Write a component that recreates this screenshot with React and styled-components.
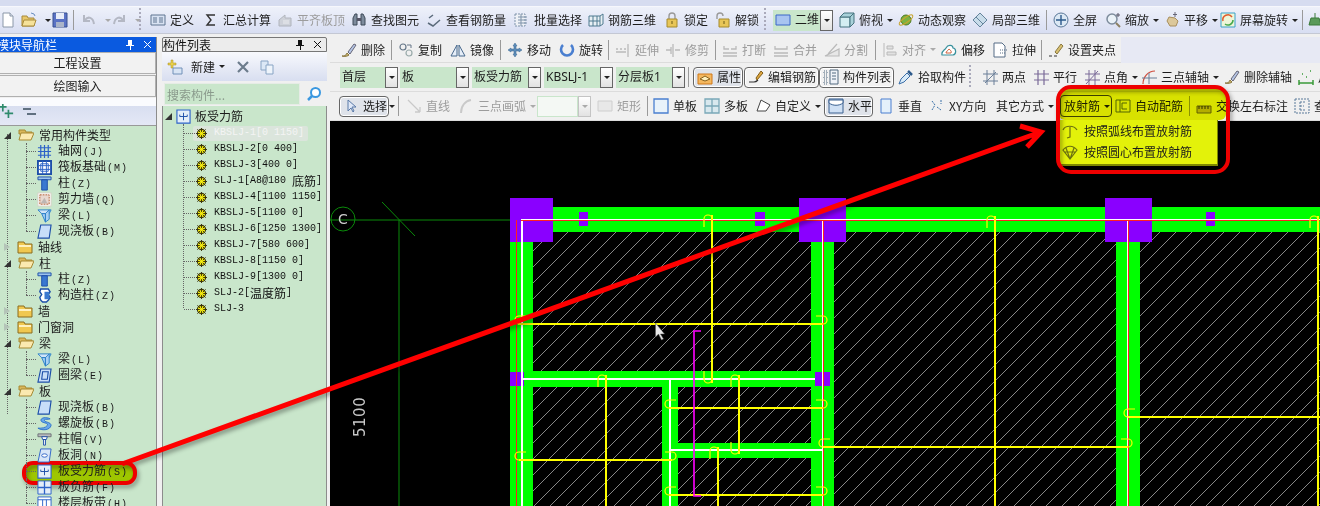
import styled, { createGlobalStyle } from "styled-components";

const GlobalStyle = createGlobalStyle`
  html, body { margin: 0; padding: 0; background: #f0f0f0; }
  * { box-sizing: border-box; }
`;

const CJK = `"Noto Sans CJK SC", "Liberation Sans", sans-serif`;

// 16x16 toolbar and tree drawings
const ICONS = {
  doc: <><path d="M3 1h7l3 3v11H3z" fill="#fff" stroke="#8a97a8" /><path d="M10 1v3h3" fill="#dfe5ee" stroke="#8a97a8" /></>,
  open: <><path d="M1 4h5l1 2h6v8H1z" fill="#e8c76a" stroke="#a88a3a" /><path d="M3 8h12l-2 6H1z" fill="#f6e29a" stroke="#a88a3a" /><path d="M10 1l3 1 1 2" fill="none" stroke="#6a8fc0" /></>,
  save: <><path d="M1 1h14v14H1z" fill="#5a72c4" stroke="#39508f" /><path d="M4 1h8v6H4z" fill="#e8edf8" /><path d="M4 10h8v5H4z" fill="#aab4c8" /></>,
  undo: <path d="M3 3v6h6M4 8c3-4 8-3 9 4" fill="none" stroke="#b4b8c4" strokeWidth="2" />,
  redo: <path d="M13 3v6H7M12 8c-3-4-8-3-9 4" fill="none" stroke="#b4b8c4" strokeWidth="2" />,
  define: <><path d="M1 3h14v10H1z" fill="#d8e2f2" stroke="#5f7590" /><path d="M3 6h4M3 8h4M3 10h4M9 6h4M9 8h4M9 10h4" stroke="#5f7590" /></>,
  sigma: <path d="M12 3H4l4 5-4 5h8" fill="none" stroke="#333" strokeWidth="1.4" />,
  level: <><path d="M2 14V8l6-5v3h6v8z" fill="#c8cbd0" stroke="#a0a4aa" /><path d="M6 9h6M6 11h6" stroke="#eee" /></>,
  binoc: <><path d="M2 6l2-4h2v11H2zM14 6l-2-4h-2v11h4z" fill="#7d8b9c" stroke="#3e4a58" /><path d="M6 6h4v3H6z" fill="#556" /></>,
  rebarSee: <path d="M2 11l5 3 7-6M3 6l4-3" fill="none" stroke="#5a6a7a" strokeWidth="1.5" />,
  batch: <><path d="M1 2h10v12H1z" fill="#eef1f6" stroke="#7f93aa" strokeDasharray="2 1" /><path d="M4 5h9M4 8h9M4 11h9M7 2v12" stroke="#7f93aa" /></>,
  rebar3d: <path d="M1 4h11l3-2v10l-3 2H1zM12 4v10M5 4v10M9 4v10M1 9h11" fill="#e8f0f4" stroke="#4e7a90" />,
  lock: <><path d="M5 7V4a3 3 0 0 1 6 0v3" fill="none" stroke="#9a9a9a" strokeWidth="1.4" /><path d="M3 7h10v8H3z" fill="#e8c658" stroke="#a58a2c" /><path d="M8 9v3" stroke="#6b5a18" /></>,
  unlock: <><path d="M2 7V4a3 3 0 0 1 6 0" fill="none" stroke="#9a9a9a" strokeWidth="1.4" /><path d="M4 7h10v8H4z" fill="#e8c658" stroke="#a58a2c" /><path d="M9 9v3" stroke="#6b5a18" /></>,
  rect2d: <path d="M1 3h14v10H1z" fill="#a8c4f0" stroke="#3a66c8" />,
  cube: <><path d="M1 5h10v10H1z" fill="#d4eef2" stroke="#44727e" /><path d="M1 5l4-4h10l-4 4zM11 5l4-4v10l-4 4z" fill="#a9d2da" stroke="#44727e" /></>,
  orbit: <><circle cx="8" cy="8" r="5" fill="#7cb342" stroke="#4d7a20" /><ellipse cx="8" cy="8" rx="8" ry="2.4" transform="rotate(-35 8 8)" fill="none" stroke="#c8a42c" /></>,
  part3d: <path d="M1 8l7-7 7 7-7 7zM4 5l7 7M8 1l7 7M1 8l7 7M6 3l-4 4" fill="#c8dcea" stroke="#64849c" />,
  full: <><circle cx="8" cy="8" r="7" fill="#dbe8f4" stroke="#5a7898" /><path d="M8 3v10M3 8h10" stroke="#2c5a8c" strokeWidth="1.4" /></>,
  zoom: <><circle cx="7" cy="7" r="5" fill="#eaf2f8" stroke="#7d8c9c" strokeWidth="1.5" /><path d="M11 11l4 4" stroke="#8c8062" strokeWidth="2" /><path d="M13 1v4M11 3h4" stroke="#556" /></>,
  pan: <><path d="M3 9l2-4 6 1 3 3-2 5H6z" fill="#dcc89a" stroke="#a88e5c" /><path d="M11 0v5M9 2.5h4" stroke="#667" /></>,
  spinScreen: <><path d="M1 1h14v14H1z" fill="#eef6d8" stroke="#3aa0c8" /><path d="M3 9a5 5 0 0 1 9-4" fill="none" stroke="#e05a2c" strokeWidth="1.5" /><path d="M13 8a5 5 0 0 1-8 4" fill="none" stroke="#46a84a" strokeWidth="1.5" /></>,
  more: <path d="M2 13h12l-2-7H4zM8 1v5" fill="#5a9a5a" stroke="#3a7a3a" />,
  brush: <><path d="M1 14c2 0 4 0 5-3l2 2c-1 1-4 2-7 1z" fill="#c7b26a" stroke="#8a7840" /><path d="M7 10l6-8 2 1-6 9z" fill="#b6c6e6" stroke="#667" /></>,
  copy: <><circle cx="5" cy="5" r="3" fill="none" stroke="#678" strokeWidth="1.2" /><circle cx="11" cy="11" r="3" fill="none" stroke="#9aa" strokeWidth="1.2" /><path d="M9 3h4v3" fill="none" stroke="#678" /></>,
  mirror: <><path d="M7 3L1 14h6z" fill="#e6eef8" stroke="#47688c" /><path d="M9 3l6 11H9z" fill="#e6eef8" stroke="#47688c" /></>,
  move: <path d="M8 1l2 3H9v3h3V6l3 2-3 2V9H9v3h1l-2 3-2-3h1V9H4v1L1 8l3-2v1h3V4H6z" fill="#5d8cb8" stroke="#3a6690" strokeWidth=".5" />,
  spin: <path d="M12 3a6 6 0 1 1-8 0" fill="none" stroke="#4a7fd0" strokeWidth="2.6" />,
  extend: <path d="M1 7h2M5 7h2M9 7h2M1 10h10M13 2v13" stroke="#a8a8a8" fill="none" strokeWidth="1.3" />,
  trim: <path d="M1 8h5M10 8h5M8 2v13M6 5v7" stroke="#a8a8a8" fill="none" strokeWidth="1.3" />,
  breakIt: <path d="M2 4v3h5M14 4v3H9M1 11h14M1 14h14" stroke="#a8a8a8" fill="none" strokeWidth="1.3" />,
  merge: <path d="M2 4v3h12V4M1 11h14M1 14h14" stroke="#a8a8a8" fill="none" strokeWidth="1.3" />,
  split: <path d="M1 14h14V7zM13 2L4 12" stroke="#a8a8a8" fill="#e4e4e4" strokeWidth="1.2" />,
  alignIt: <path d="M2 1v14M5 4h6v3H5zM5 10h9v3H5z" stroke="#a8a8a8" fill="#ddd" />,
  offset: <><path d="M1 13c-1-4 3-5 4-7 2-4 7-3 7 0 3 0 4 6 0 7z" fill="#fff" stroke="#38909c" strokeWidth="1.2" /><path d="M5 11c0-2 2-2 3-4 1 1 3 2 2 4z" fill="none" stroke="#d0603c" /></>,
  stretch: <><path d="M2 1h8l3 3v11H2z" fill="#fff" stroke="#566d86" /><path d="M8 8h7M8 11h5" stroke="#566d86" strokeDasharray="1 1" /></>,
  grip: <><path d="M1 14h3M6 14h3" stroke="#333" /><path d="M7 10l6-8 2 2-6 8z" fill="#d8c070" stroke="#8a7840" /></>,
  attr: <><path d="M1 5h14v10H1z" fill="#f4b860" stroke="#d07818" /><path d="M3 10l5-3 5 3-5 2z" fill="#fff2c0" stroke="#86601c" /></>,
  editBar: <><path d="M1 13h5c2 0 3-1 4-2" fill="none" stroke="#333" strokeWidth="1.2" /><path d="M8 9l5-7 2 2-6 7z" fill="#e0a840" stroke="#805c18" /></>,
  list: <><path d="M1 2h3v3H1zM1 7h3v3H1zM1 12h3v3H1z" fill="none" stroke="#526a80" strokeDasharray="1 1" /><path d="M7 1h8v14H7z" fill="#eef2f8" stroke="#526a80" /><path d="M9 4h4M9 7h4M9 10h4" stroke="#526a80" /></>,
  pick: <><path d="M1 15l2-5 6-6 3 3-6 6z" fill="#d8eaf8" stroke="#3a6ea8" /><path d="M10 2l4 4" stroke="#2c5a8c" strokeWidth="2.5" /></>,
  twoPt: <path d="M1 5h15M1 12h15M5 1v15M12 1v15M3 14L14 3" stroke="#6a7f98" fill="none" />,
  para: <path d="M1 5h15M1 11h15M5 1v15M11 1v15" stroke="#7a6a98" fill="none" strokeWidth="1.2" />,
  ptAngle: <path d="M1 5h15M1 11h15M5 1v15M11 1v15M2 15L14 2" stroke="#7a6a98" fill="none" />,
  arc3: <><path d="M2 15C2 8 7 2 14 2" stroke="#d04c3c" fill="none" strokeWidth="1.2" /><path d="M1 9h15M8 4v11" stroke="#6a7f98" /></>,
  ruler: <path d="M1 14h14M1 11v6M15 11v6M4 5h1M12 2h1M8 8h1" stroke="#3a9a3a" fill="none" strokeWidth="1.5" />,
  select: <path d="M5 2v11l3-3 2 4 1-1-2-4h4z" fill="#dfe8f8" stroke="#5a7aa8" />,
  line: <path d="M2 2l12 12M14 14V9M14 14H9" stroke="#bdbdbd" fill="none" strokeWidth="1.3" />,
  arc: <path d="M3 15C3 8 7 3 13 2" stroke="#bdbdbd" fill="none" strokeWidth="2" />,
  rect: <path d="M1 3h14v10H1z" fill="#e6e6e6" stroke="#c4c4c4" />,
  single: <path d="M1 1h14v14H1z" fill="#e8f2fa" stroke="#4a7fd0" strokeWidth="1.3" />,
  multi: <path d="M1 1h14v14H1zM8 1v14M1 8h14" fill="#d8e8ee" stroke="#7aa8b8" strokeWidth="1.3" />,
  custom: <path d="M2 13l4-11 9 5-4 6z" fill="#fff" stroke="#444" />,
  horiz: <><path d="M1 1h14v14H1z" fill="#cfe0f4" stroke="#3a6090" /><path d="M1 5c4 3 10 3 14 0v-3H1z" fill="#fff" stroke="#3a6090" /></>,
  vert: <path d="M3 1h10v14H3z" fill="#e4f0fa" stroke="#4a7fd0" />,
  xy: <path d="M3 3l3 4-3 5M8 9l4 3M12 2v4" stroke="#3a70a8" fill="none" strokeDasharray="2 1" />,
  autoBar: <path d="M1 2h14v12H1zM5 2v12M7 5h5M7 5v6h5" fill="none" stroke="#5a6a10" />,
  swap: <><path d="M1 8h14v7H1z" fill="#c8b840" stroke="#6a6418" /><path d="M3 8v3M6 8v3M9 8v3M12 8v3" stroke="#333" /></>,
  look: <path d="M1 1h14v14H1zM6 4v8M6 4h5M6 8h4M6 12h5" fill="none" stroke="#5a7a9a" strokeDasharray="2 1" />,
  newItem: <><path d="M1 3h3V0h2v3h3v2H6v3H4V5H1z" transform="translate(0 1)" fill="#e8cf4c" stroke="#a88e1c" strokeWidth=".5" /><path d="M6 9h9v6H6z" fill="#d8e4f4" stroke="#7090b8" /></>,
  cross: <path d="M3 3l10 10M13 3L3 13" stroke="#6c7c8c" strokeWidth="2.2" />,
  paste: <><path d="M2 2h7v9H2z" fill="#dce8f6" stroke="#88a4c4" /><path d="M7 6h7v9H7z" fill="#eef4fb" stroke="#88a4c4" /></>,
  search: <><circle cx="9.5" cy="6.5" r="4.5" fill="#fff" stroke="#3a98e0" strokeWidth="2" /><path d="M6 10l-4 4" stroke="#3a98e0" strokeWidth="2.5" /></>,
  plus: <path d="M3 0v8M0 3h7M9 6v9M5 10h9" stroke="#2e8a6c" strokeWidth="1.8" fill="none" />,
  minus: <path d="M2 5h8M6 10h9" stroke="#607080" strokeWidth="1.8" fill="none" />,
  folderOpen: <><path d="M1 3h6l1 2h6v2H1z" fill="#d9b65a" stroke="#a68832" /><path d="M1 13l2-7h13l-3 7z" fill="#fbe9b0" stroke="#a68832" /></>,
  folder: <><path d="M1 3h6l1 2h7v9H1z" fill="#f0c850" stroke="#8a6c20" /><path d="M2 6h12v2H2z" fill="#fff1c0" /></>,
  grid: <path d="M1 4h14M1 8h14M1 12h14M4 1v14M8 1v14M12 1v14" stroke="#2c62c8" fill="none" strokeWidth="1.3" />,
  raft: <><path d="M1 1h14v14H1z" fill="#fff" stroke="#1c4ea8" strokeWidth="2" /><path d="M4 4h8v8H4zM6 1v14M10 1v14M1 6h14M1 10h14" fill="none" stroke="#2c62c8" /></>,
  col: <><path d="M1 1h14v3H1z" fill="#9cc4ee" stroke="#1c4ea8" /><path d="M5 4h6v11H5z" fill="#3a78d0" stroke="#1c4ea8" /></>,
  wall: <><path d="M1 1h14v14H1z" fill="#fff" stroke="#d8d0c8" /><path d="M3 3h10v10H3z" fill="#e8d8d0" stroke="#b05c30" strokeDasharray="2 1" /><path d="M4 12l4-6 3 6z" fill="#a0a0a0" opacity=".6" /></>,
  beam: <><path d="M1 2h14l-2 4H5z" fill="#cfe4f8" stroke="#2c80c8" /><path d="M5 6l4 9V6zM9 6l4-4v10l-4 3z" fill="#a8d0f4" stroke="#2c80c8" /></>,
  slab: <path d="M4 1h11l-2 14H1z" fill="#c8def8" stroke="#1c4ea8" strokeWidth="1.2" />,
  gz: <><path d="M4 1h8l2 3-2 3 2 3-2 3-2 2H6l-2-2-1-3 2-3-2-3z" fill="#fff" stroke="#1c4ea8" strokeWidth="1.5" /><path d="M8 4h5v8H8z" fill="#3a78d0" /></>,
  ring: <path d="M4 1h11l-2 14H1zM6 4h6l-1 8H5z" fill="#c8def8" stroke="#1c4ea8" strokeWidth="1.2" />,
  spiral: <path d="M14 3C8 0 2 3 5 6c3 2 7 1 6 4-2 3-6 3-10 3 5 3 13 2 14-3 0-4-8-3-7-6 1-1 4 0 6-1z" fill="#6aa8ec" stroke="#2c70c8" />,
  cap: <><path d="M1 2h14v3H1z" fill="#b8bcc0" stroke="#6c7074" /><path d="M5 5h6l-1 3H6zM7 8h2v6H7z" fill="#fff" stroke="#1c4ea8" /></>,
  hole: <><path d="M4 1h11l-2 14H1z" fill="#d8e6f8" stroke="#2c62c8" /><ellipse cx="8" cy="8" rx="3" ry="1.8" fill="#fff" stroke="#2c62c8" /></>,
  bar: <><path d="M1 1h14v14H1z" fill="#e4eef8" stroke="#2c62c8" strokeWidth="1.2" /><path d="M8 4v8M4 8h8M4 8V6M12 8v-2" fill="none" stroke="#1c4ea8" /></>,
  neg: <><path d="M1 1h14v14H1z" fill="#e4eef8" stroke="#2c62c8" /><path d="M1 8h14M8 1v14" stroke="#2c62c8" strokeWidth="1.4" /></>,
  band: <><path d="M1 1h14v14H1z" fill="#fff" stroke="#2c62c8" /><path d="M1 4h14M6 4v11M10 4v11" stroke="#2c62c8" /></>,
  rod: <><circle cx="8" cy="8" r="6" fill="#f4ec10" stroke="#3a3408" strokeWidth="1.6" /><path d="M8 0v16M0 8h16M2 2l12 12M14 2L2 14" stroke="#3a3408" strokeWidth="1.4" /><circle cx="8" cy="8" r="2.5" fill="#f4ec10" /></>,
  arcFan: <path d="M1 7C3 2 12 2 15 7M8 4v10l-3 1" fill="none" stroke="#6a7010" strokeWidth="1.2" />,
  fan: <path d="M1 6c4-5 10-5 14 0l-7 9zM4 4l4 11M12 4L8 15M3 8h10" fill="none" stroke="#6a7010" strokeWidth="1.2" />,
};

const Glyph = styled.svg.attrs({ viewBox: "0 0 16 16" })`
  width: ${(p) => p.$size || 16}px;
  height: ${(p) => p.$size || 16}px;
  flex: none;
`;

const Icon = ({ name, size }) => <Glyph $size={size}>{ICONS[name]}</Glyph>;

const Page = styled.div`
  position: relative;
  width: 1320px;
  height: 506px;
  overflow: hidden;
  background: #f0f0f0;
  color: #1c1c1c;
  font: 12px/16px ${CJK};
`;

const TopStrip = styled.div`
  height: 7px;
  background: #d6dcf0;
  border-bottom: 1px solid #f6f7fc;
`;

const MainBar = styled.div`
  display: flex;
  align-items: center;
  height: 27px;
  background: linear-gradient(#eef1fa, #d8def2);
  border-bottom: 1px solid #c4c8d4;
  overflow: hidden;
  white-space: nowrap;
`;

const Body = styled.div`
  display: flex;
  height: 472px;
  padding-top: 3px;
`;

const LeftPanel = styled.aside`
  width: 157px;
  display: flex;
  flex-direction: column;
  border-right: 1px solid #8c8c8c;
  flex: none;
`;

const MiddlePanel = styled.aside`
  width: 165px;
  margin: 0 3px 0 5px;
  display: flex;
  flex-direction: column;
  flex: none;
`;

const RightPanel = styled.main`
  flex: 1;
  display: flex;
  flex-direction: column;
  min-width: 0;
`;

const PanelHead = styled.header`
  height: 15px;
  display: flex;
  align-items: center;
  justify-content: space-between;
  padding-right: 3px;
  overflow: hidden;
  white-space: nowrap;
  background: ${(p) => (p.$active ? "#0a5ae0" : "#ececec")};
  color: ${(p) => (p.$active ? "#fff" : "#111")};
  border: ${(p) => (p.$active ? "none" : "1px solid #777")};
  border-radius: ${(p) => (p.$active ? "0" : "2px 2px 0 0")};
  span { margin-left: ${(p) => (p.$active ? "-3px" : "0")}; }
`;

const HeadButtons = styled.div`
  display: flex;
  gap: 7px;
  align-items: center;
  svg { width: 11px; height: 11px; }
`;

const NavButton = styled.div`
  height: 22px;
  margin-bottom: 1px;
  display: flex;
  align-items: center;
  justify-content: center;
  background: #f2f2f2;
  border: 1px solid #b0b0b0;
  border-left: none;
`;

const ExpandBar = styled.div`
  height: 28px;
  display: flex;
  align-items: center;
  gap: 6px;
  background: linear-gradient(#fafbfe 0 30%, #d8def0 30%, #e4e8f6);
  border-bottom: 1px solid #999;
`;

const TreeBox = styled.div`
  flex: 1;
  position: relative;
  overflow: hidden;
  padding-top: ${(p) => (p.$boxed ? 2 : 1)}px;
  background: #c9e6cb;
  border-left: ${(p) => (p.$boxed ? "1px solid #8c8c8c" : "none")};
  border-right: ${(p) => (p.$boxed ? "1px solid #8c8c8c" : "none")};
  &::before {
    content: "";
    position: absolute;
    left: ${(p) => (p.$boxed ? 20 : 7)}px;
    top: ${(p) => (p.$boxed ? 18 : 8)}px;
    height: ${(p) => (p.$boxed ? "184px" : "280px")};
    border-left: 1px dotted #666;
  }
`;

const TreeRow = styled.div`
  position: relative;
  z-index: 1;
  height: 16px;
  display: flex;
  align-items: center;
  white-space: nowrap;
  padding-left: ${(p) => p.$indent}px;
  gap: ${(p) => p.$gap ?? 5}px;
`;

const RootRow = styled(TreeRow)`
  margin-bottom: 1px;
`;

const FolderName = styled.span`
  margin-left: 5px;
`;

const Twist = styled.i`
  flex: none;
  width: 0;
  height: 0;
  margin-right: ${(p) => p.$space}px;
  border-style: solid;
  ${(p) =>
    p.$open
      ? `border-width: 0 0 7px 7px; border-color: transparent transparent #333 transparent;`
      : `border-width: 4px 0 4px 6px; border-color: transparent transparent transparent #b4c4b8;`}
`;

const Branch = styled.div`
  position: relative;
  & > ${TreeRow}::before {
    content: "";
    position: absolute;
    left: 26px;
    top: 8px;
    width: 10px;
    border-top: 1px dotted #666;
  }
  & > ${TreeRow}::after {
    content: "";
    position: absolute;
    left: 26px;
    top: 0;
    height: 16px;
    border-left: 1px dotted #666;
  }
  & > ${TreeRow}:last-child::after { height: 8px; }
`;

const Code = styled.span`
  font: 10px/16px "Liberation Mono", monospace;
  white-space: pre;
  letter-spacing: ${(p) => (p.$spread ? "1px" : "0")};
  margin-left: ${(p) => (p.$spread ? "1px" : "0")};
`;

const ListRow = styled(TreeRow)`
  &::before {
    content: "";
    position: absolute;
    left: 21px;
    top: 8px;
    width: 11px;
    border-top: 1px dotted #666;
  }
  svg {
    position: relative;
    z-index: 1;
  }
`;

const ListLabel = styled.span`
  display: inline-flex;
  align-items: center;
  height: 15px;
  margin-left: ${(p) => (p.$selected ? "-21px" : "0")};
  padding-left: ${(p) => (p.$selected ? "21px" : "0")};
  padding-right: 4px;
  border-radius: 2px;
  color: ${(p) => (p.$selected ? "#f4f4f4" : "#111")};
  background: ${(p) => (p.$selected ? "#dbe5dc" : "none")};
`;

const ListBar = styled.div`
  height: 29px;
  display: flex;
  align-items: center;
  gap: 8px;
  padding-left: 5px;
  white-space: nowrap;
  background: linear-gradient(#f8f9fd, #d8def0);
`;

const Caret = styled.i`
  width: 0;
  height: 0;
  flex: none;
  border-style: solid;
  border-width: 3px 3px 0;
  border-color: ${(p) => p.$color || "#222"} transparent transparent;
`;

const SearchRow = styled.div`
  height: 25px;
  display: flex;
  align-items: center;
  gap: 6px;
  padding: 0 5px 0 2px;
  background: #f0f0f0;
`;

const SearchField = styled.div`
  width: 137px;
  height: 22px;
  padding-left: 2px;
  line-height: 21px;
  color: #8a9a8c;
  background: #c9e6cb;
  border: 1px solid #e6ece6;
`;

const Row = styled.div`
  display: flex;
  align-items: center;
  height: ${(p) => p.$h}px;
  padding-left: ${(p) => p.$pad}px;
  background: #f0f0f0;
  border-bottom: 1px solid #dcdcdc;
  white-space: nowrap;
  overflow: hidden;
`;

const EditRow = styled.div`
  height: 26px;
  background: #e7e9f4;
  display: flex;
`;

const Tool = styled.div`
  display: flex;
  align-items: center;
  flex: none;
  gap: 4px;
  width: ${(p) => p.$w}px;
  color: ${(p) => (p.$off ? "#9c9c9c" : "#1c1c1c")};
  svg { opacity: ${(p) => (p.$off ? 0.75 : 1)}; }
`;

const PillTool = styled(Tool)`
  height: 21px;
  padding: 0 3px;
  border: 1px solid #666;
  border-radius: 4px;
  background: ${(p) => (p.$pressed ? "#dfe3ea" : "#f2f2f2")};
  box-shadow: inset 0 0 0 1px #fff;
`;

const Divider = styled.div`
  flex: none;
  width: ${(p) => p.$w}px;
  height: 20px;
  &::before {
    content: "";
    display: block;
    width: 1px;
    height: 20px;
    background: #9a9a9a;
  }
`;

const Dots = styled.div`
  flex: none;
  width: ${(p) => p.$w}px;
  height: 24px;
  &::before {
    content: "";
    display: block;
    width: 2px;
    height: 24px;
    background: repeating-linear-gradient(#aab 0 2px, transparent 2px 4px);
  }
`;

const Combo = styled.div`
  display: flex;
  flex: none;
  width: ${(p) => p.$w}px;
  height: 21px;
  line-height: 20px;
`;

const ComboText = styled.div`
  width: ${(p) => p.$w}px;
  padding-left: 2px;
  background: ${(p) => (p.$blank ? "#f4f8f4" : "#c9e6cb")};
  border: ${(p) => (p.$blank ? "1px solid #c9e6cb" : "none")};
  font-family: "Noto Sans", ${CJK};
`;

const ComboArrow = styled.div`
  width: 13px;
  display: flex;
  align-items: center;
  justify-content: center;
  background: linear-gradient(#fff, #e2e2e2);
  border: 1px solid ${(p) => (p.$off ? "#c4c4c4" : "#666")};
`;

const Canvas = styled.svg.attrs({ viewBox: "330 121 990 385" })`
  display: block;
  width: 990px;
  height: 385px;
  background: #000;
`;

const Highlight = styled.div`
  position: absolute;
  left: ${(p) => p.$x}px;
  top: ${(p) => p.$y}px;
  width: ${(p) => p.$w}px;
  height: ${(p) => p.$h}px;
  background: ${(p) => p.$color};
  border-radius: 6px;
  mix-blend-mode: multiply;
`;

const Flyout = styled.div`
  position: absolute;
  left: 1060px;
  top: 120px;
  width: 158px;
  height: 46px;
  background: #e3f20a;
  border-right: 1px solid #7d8800;
  border-bottom: 2px solid #7d8800;
`;

const FlyoutItem = styled.div`
  display: flex;
  align-items: center;
  gap: 6px;
  height: 21px;
  padding-left: 2px;
  white-space: nowrap;
`;

const Annotations = styled.svg.attrs({ viewBox: "0 0 1320 506" })`
  position: absolute;
  left: 0;
  top: 0;
  width: 1320px;
  height: 506px;
  pointer-events: none;
  filter: drop-shadow(2px 3px 2px rgba(0, 0, 0, 0.35));
`;

const CLOSE = <path d="M2 2l7 7M9 2L2 9" stroke="currentColor" fill="none" />;
const PIN = <path d="M4 1h4v5h2v1H7v4H6V7H2V6h2z" fill="currentColor" />;

const PanelButtons = () => (
  <HeadButtons>
    <svg viewBox="0 0 11 11">{PIN}</svg>
    <svg viewBox="0 0 11 11">{CLOSE}</svg>
  </HeadButtons>
);

// every tool is [x on the page, icon, label, options]; a width comes from the next x
const MAIN_TOOLS = [
  [5, "doc"], [26, "open", "", { caret: 1 }], [57, "save"], [78, "sep"],
  [86, "undo", "", { caret: "#aaa" }], [116, "redo", "", { caret: "#aaa" }], [144, "dots"],
  [155, "define", "定义"], [208, "sigma", "汇总计算"], [282, "level", "平齐板顶", { off: 1 }],
  [356, "binoc", "查找图元"], [431, "rebarSee", "查看钢筋量"], [519, "batch", "批量选择"],
  [593, "rebar3d", "钢筋三维"], [669, "lock", "锁定"], [720, "unlock", "解锁"], [769, "dots"],
  [778, "combo2d"], [844, "cube", "俯视", { caret: 1 }], [903, "orbit", "动态观察"],
  [977, "part3d", "局部三维"], [1051, "sep"], [1058, "full", "全屏"], [1110, "zoom", "缩放", { caret: 1 }],
  [1169, "pan", "平移", { caret: 1 }], [1225, "spinScreen", "屏幕旋转", { caret: 1 }], [1307, "sep"],
  [1312, "more"], [1340, "end"],
];

const EDIT_TOOLS = [
  [341, "brush", "删除"], [391, "sep"], [398, "copy", "复制"], [450, "mirror", "镜像"], [500, "sep"],
  [507, "move", "移动"], [559, "spin", "旋转"], [608, "sep"], [615, "extend", "延伸", { off: 1 }],
  [665, "trim", "修剪", { off: 1 }], [715, "sep"], [722, "breakIt", "打断", { off: 1 }],
  [773, "merge", "合并", { off: 1 }], [824, "split", "分割", { off: 1 }], [875, "sep"],
  [882, "alignIt", "对齐", { off: 1, caret: "#aaa" }], [941, "offset", "偏移"], [992, "stretch", "拉伸"],
  [1041, "sep"], [1048, "grip", "设置夹点"], [1121, "end"],
];

const PROPERTY_TOOLS = [
  [340, "combo", "首层", { w: 45 }], [400, "combo", "板", { w: 56 }], [472, "combo", "板受力筋", { w: 56 }],
  [544, "combo", "KBSLJ-1", { w: 56 }], [616, "combo", "分层板1", { w: 56 }], [688, "sep"],
  [693, "attr", "属性", { pill: 1, pressed: 1, pw: 50 }], [744, "editBar", "编辑钢筋", { pill: 1, pw: 75 }],
  [819, "list", "构件列表", { pill: 1, pw: 75 }], [898, "pick", "拾取构件"], [969, "dots"],
  [982, "twoPt", "两点"], [1033, "para", "平行"], [1084, "ptAngle", "点角", { caret: 1 }],
  [1141, "arc3", "三点辅轴", { caret: 1 }], [1224, "brush", "删除辅轴"], [1298, "ruler", "尺寸"], [1350, "end"],
];

const DRAW_TOOLS = [
  [339, "select", "选择", { pill: 1, pressed: 1, pw: 50 }], [389, "caretOnly"], [398, "sep"],
  [406, "line", "直线", { off: 1 }], [458, "arc", "三点画弧", { off: 1, caret: "#aaa" }],
  [537, "blank"], [597, "rect", "矩形", { off: 1 }], [647, "sep"], [653, "single", "单板"],
  [704, "multi", "多板"], [755, "custom", "自定义", { caret: 1 }],
  [824, "horiz", "水平", { pill: 1, pressed: 1, pw: 49 }], [878, "vert", "垂直"], [929, "xy", "XY方向"],
  [996, null, "其它方式", { caret: 1 }], [1060, "radial"], [1115, "autoBar", "自动配筋"], [1189, "sep"],
  [1196, "swap", "交换左右标注"], [1294, "look", "查改"], [1350, "end"],
];

const RadialButton = styled(Tool)`
  height: 22px;
  padding-left: 3px;
  border: 1px solid #444;
  border-radius: 4px;
`;

const renderTool = (tool, i, list) => {
  const [x, icon, label, opts = {}] = tool;
  if (icon === "end") return null;
  const w = list[i + 1][0] - x;
  if (icon === "sep") return <Divider key={i} $w={w} />;
  if (icon === "dots") return <Dots key={i} $w={w} />;
  if (icon === "caretOnly") return <Tool key={i} $w={w}><Caret /></Tool>;
  if (icon === "radial")
    return (
      <Tool key={i} $w={w}>
        <RadialButton $w={52}>放射筋<Caret /></RadialButton>
      </Tool>
    );
  if (icon === "blank")
    return (
      <Combo key={i} $w={w}>
        <ComboText $w={41} $blank />
        <ComboArrow $off><Caret $color="#aaa" /></ComboArrow>
      </Combo>
    );
  if (icon === "combo2d")
    return (
      <Combo key={i} $w={w}>
        <ComboText $w={47}>
          <Tool $w={45}><Icon name="rect2d" />二维</Tool>
        </ComboText>
        <ComboArrow><Caret /></ComboArrow>
      </Combo>
    );
  if (icon === "combo")
    return (
      <Combo key={i} $w={w}>
        <ComboText $w={opts.w}>{label}</ComboText>
        <ComboArrow><Caret /></ComboArrow>
      </Combo>
    );
  const Shell = opts.pill ? PillTool : Tool;
  const body = (
    <Shell $w={opts.pill ? opts.pw : w} $off={opts.off} $pressed={opts.pressed}>
      {icon && <Icon name={icon} />}
      <span>{label}</span>
      {opts.caret && <Caret $color={opts.caret === 1 ? "#222" : opts.caret} />}
    </Shell>
  );
  return opts.pill ? <Tool key={i} $w={w}>{body}</Tool> : <span key={i}>{body}</span>;
};

const NAV_TREE = [
  { t: "常用构件类型", open: true, kids: [["grid", "轴网", "J"], ["raft", "筏板基础", "M"], ["col", "柱", "Z"], ["wall", "剪力墙", "Q"], ["beam", "梁", "L"], ["slab", "现浇板", "B"]] },
  { t: "轴线" },
  { t: "柱", open: true, kids: [["col", "柱", "Z"], ["gz", "构造柱", "Z"]] },
  { t: "墙" },
  { t: "门窗洞" },
  { t: "梁", open: true, kids: [["beam", "梁", "L"], ["ring", "圈梁", "E"]] },
  { t: "板", open: true, kids: [["slab", "现浇板", "B"], ["spiral", "螺旋板", "B"], ["cap", "柱帽", "V"], ["hole", "板洞", "N"], ["bar", "板受力筋", "S"], ["neg", "板负筋", "F"], ["band", "楼层板带", "H"]] },
];

const REBARS = [
  "KBSLJ-1[0 1150]", "KBSLJ-2[0 400]", "KBSLJ-3[400 0]", "SLJ-1[A8@180 底筋]", "KBSLJ-4[1100 1150]",
  "KBSLJ-5[1100 0]", "KBSLJ-6[1250 1300]", "KBSLJ-7[580 600]", "KBSLJ-8[1150 0]", "KBSLJ-9[1300 0]",
  "SLJ-2[温度筋]", "SLJ-3",
];

// latin in the lists is a 6px wide bitmap-like mono, han stays at 12px
const mixed = (text) =>
  text.split(/([\u4e00-\u9fff]+)/).map((part, i) =>
    i % 2 ? <span key={i}>{part}</span> : <Code key={i}>{part}</Code>
  );

const hookTop = (x, y) => `M${x - 8} ${y + 12}V${y + 4}a4 4 0 0 1 8 0`;
const hookBottom = (x, y) => `M${x - 8} ${y - 12}V${y - 4}a4 4 0 0 0 8 0`;
const hookRight = (x, y) => `M${x - 7} ${y - 8}H${x}a4 4 0 0 1 0 8`;
const hookLeft = (x, y) => `M${x + 7} ${y - 8}H${x}a4 4 0 0 0 0 8`;

const H_BARS = [[518, 823, 324], [669, 823, 408], [519, 672, 460], [669, 823, 495], [823, 1128, 447], [1128, 1320, 417]];
const V_BARS = [[712, 215, 383], [606, 375, 506], [739, 375, 454], [718, 447, 506], [995, 216, 506], [1318, 216, 506]];
const HOOKS = [
  hookRight(823, 324), hookLeft(519, 324),
  hookLeft(669, 408), hookRight(823, 408), hookLeft(519, 460), hookRight(672, 460),
  hookLeft(669, 495), hookRight(823, 495), hookLeft(823, 447), hookRight(1128, 447), hookLeft(1128, 417),
  hookTop(712, 215), hookBottom(712, 383), hookTop(606, 375), hookTop(739, 375), hookBottom(739, 454),
  hookTop(718, 447), hookTop(995, 216), hookTop(1318, 216),
];
const GREEN_BEAMS = [[510, 207, 810, 25], [510, 232, 23, 274], [811, 232, 23, 274], [1116, 232, 24, 274], [533, 371, 278, 16], [662, 387, 16, 119], [678, 443, 133, 15]];
const WHITE_LINES = [[521, 219, 799, 1], [521, 219, 2, 287], [822, 220, 1, 286], [1127, 220, 1, 286], [521, 378, 294, 2], [669, 379, 2, 127], [671, 449, 152, 2]];
const RED_LINES = [[521, 220, 799, 1], [516, 220, 1, 286], [823, 220, 1, 286], [1128, 220, 1, 286]];
const COLUMNS = [[510, 198, 43, 44], [799, 198, 47, 44], [1105, 198, 47, 44], [579, 212, 9, 14], [755, 212, 10, 14], [1206, 212, 9, 14], [510, 372, 14, 14], [815, 372, 15, 14]];

const Drawing = () => (
  <Canvas>
    <defs>
      <pattern id="hatch" width="16" height="16" patternUnits="userSpaceOnUse">
        <path d="M-1 17L17 -1" stroke="#a8a8a8" strokeWidth=".8" />
      </pattern>
    </defs>
    <rect x="533" y="232" width="787" height="274" fill="url(#hatch)" />
    {GREEN_BEAMS.map(([x, y, w, h], i) => <rect key={i} x={x} y={y} width={w} height={h} fill="#00ff00" />)}
    {COLUMNS.map(([x, y, w, h], i) => <rect key={i} x={x} y={y} width={w} height={h} fill="#8a00ff" />)}
    {WHITE_LINES.map(([x, y, w, h], i) => <rect key={i} x={x} y={y} width={w} height={h} fill="#fff" />)}
    {RED_LINES.map(([x, y, w, h], i) => <rect key={i} x={x} y={y} width={w} height={h} fill="#ff2020" />)}
    {H_BARS.map(([a, b, y], i) => <rect key={i} x={a} y={y - 1} width={b - a} height="2" fill="#ffff00" />)}
    {V_BARS.map(([x, a, b], i) => <rect key={i} x={x - 1} y={a} width="2" height={b - a} fill="#ffff00" />)}
    {HOOKS.map((d, i) => <path key={i} d={d} fill="none" stroke="#ffff00" strokeWidth="1.2" />)}
    <path d="M701 331h-7v165h7" fill="none" stroke="#ff00ff" strokeWidth="1.6" />
    <path d="M330 220H510M399 220V506M382 202L415 236" stroke="#0a8a0a" fill="none" />
    <circle cx="343" cy="219" r="12" fill="none" stroke="#0a8a0a" />
    <text x="343" y="224" textAnchor="middle" fontFamily="DejaVu Sans" fontSize="14" fill="#ccc">C</text>
    <text transform="translate(365 437) rotate(-90)" fontFamily="DejaVu Sans" fontSize="15" letterSpacing=".5" fill="#c8c8c8">5100</text>
    <path d="M655.5 323v14l3-3 3 6 2-1-3-5h4z" fill="#e8e8e8" stroke="#555" strokeWidth=".5" />
  </Canvas>
);

const App = () => (
  <Page>
    <GlobalStyle />
    <TopStrip />
    <MainBar>{MAIN_TOOLS.map(renderTool)}</MainBar>
    <Body>
      <LeftPanel>
        <PanelHead $active>
          <span>模块导航栏</span>
          <PanelButtons />
        </PanelHead>
        <NavButton>工程设置</NavButton>
        <NavButton>绘图输入</NavButton>
        <ExpandBar>
          <Icon name="plus" size={15} />
          <Icon name="minus" size={16} />
        </ExpandBar>
        <TreeBox>
          {NAV_TREE.map((node) => (
            <div key={node.t + node.kids?.length}>
              <TreeRow $indent={4} $gap={0}>
                <Twist $open={node.open} $space={7} />
                <Icon name={node.open ? "folderOpen" : "folder"} />
                <FolderName>{node.t}</FolderName>
              </TreeRow>
              {node.kids && (
                <Branch>
                  {node.kids.map(([icon, label, key]) => (
                    <TreeRow key={label} $indent={37} $gap={6}>
                      <Icon name={icon} size={15} />
                      <span>{label}<Code $spread>({key})</Code></span>
                    </TreeRow>
                  ))}
                </Branch>
              )}
            </div>
          ))}
        </TreeBox>
      </LeftPanel>
      <MiddlePanel>
        <PanelHead>
          <span>构件列表</span>
          <PanelButtons />
        </PanelHead>
        <ListBar>
          <Icon name="newItem" />
          <Tool $w={36}>新建<Caret /></Tool>
          <Icon name="cross" />
          <Icon name="paste" />
        </ListBar>
        <SearchRow>
          <SearchField>搜索构件...</SearchField>
          <Icon name="search" />
        </SearchRow>
        <TreeBox $boxed>
          <RootRow $indent={2} $gap={4}>
            <Twist $open $space={0} />
            <Icon name="bar" size={15} />
            <span>板受力筋</span>
          </RootRow>
          {REBARS.map((item, i) => (
            <ListRow key={item} $indent={33} $gap={7}>
              <Icon name="rod" size={11} />
              <ListLabel $selected={i === 0}>{mixed(item)}</ListLabel>
            </ListRow>
          ))}
        </TreeBox>
      </MiddlePanel>
      <RightPanel>
        <EditRow>
          <Row $h={26} $pad={11}>{EDIT_TOOLS.map(renderTool)}</Row>
        </EditRow>
        <Row $h={29} $pad={10}>{PROPERTY_TOOLS.map(renderTool)}</Row>
        <Row $h={29} $pad={9}>{DRAW_TOOLS.map(renderTool)}</Row>
        <Drawing />
      </RightPanel>
    </Body>

    <Highlight $x={1059} $y={88} $w={167} $h={32} $color="#e6f000" />
    <Highlight $x={25} $y={464} $w={109} $h={17} $color="#c8dc00" />
    <Flyout>
      <FlyoutItem><Icon name="arcFan" />按照弧线布置放射筋</FlyoutItem>
      <FlyoutItem><Icon name="fan" />按照圆心布置放射筋</FlyoutItem>
    </Flyout>

    <Annotations>
      <path d="M122 464L1038 133M1020 126L1041 132L1027 147" fill="none" stroke="#ff0000" strokeWidth="5" />
      <rect x="24" y="463" width="111" height="20" rx="9" fill="none" stroke="#ee0000" strokeWidth="4" />
      <rect x="1058" y="87" width="170" height="85" rx="13" fill="none" stroke="#ee0000" strokeWidth="4" />
    </Annotations>
  </Page>
);

export default App;
